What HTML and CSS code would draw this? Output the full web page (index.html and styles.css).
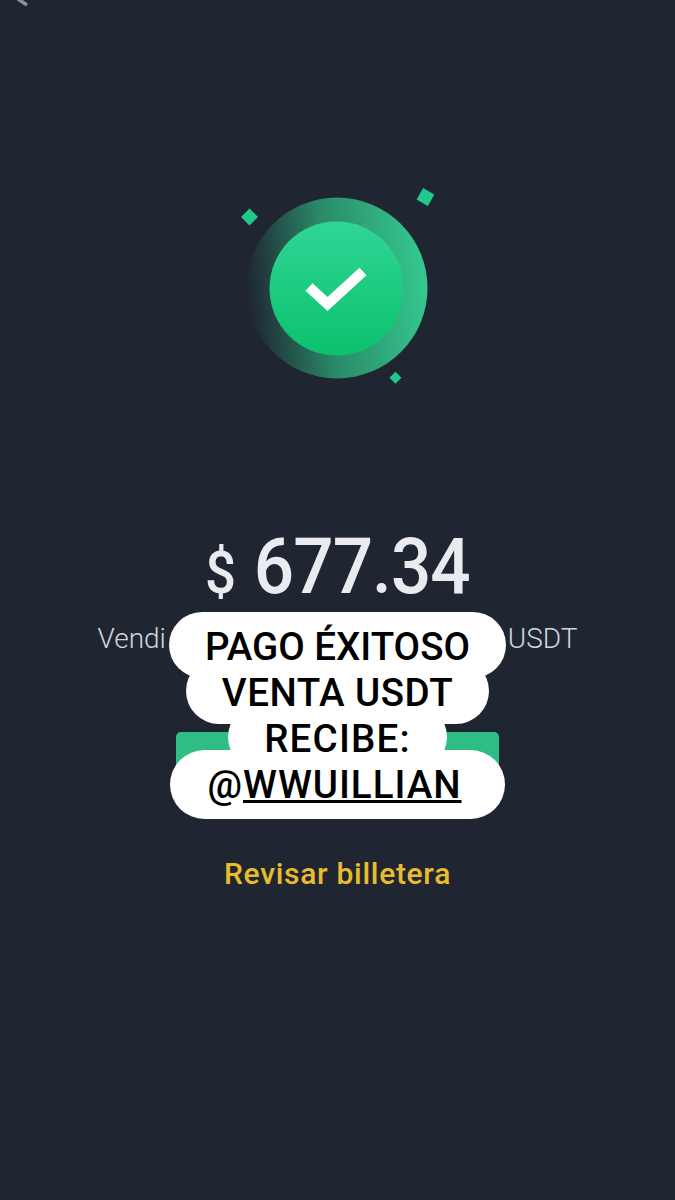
FILE: index.html
```html
<!DOCTYPE html>
<html lang="es">
<head>
    <meta charset="UTF-8">
    <meta name="viewport" content="width=device-width, initial-scale=1.0">
    <title>Pago exitoso</title>
    <link rel="stylesheet" href="styles.css">
</head>
<body>
    <div class="screen">
        <div class="top-bar">
            <svg class="back-icon" width="14" height="8" viewBox="0 0 14 8">
                <path d="M18 -1 L27 5" transform="translate(-16 0)" fill="none" stroke="#8b909a" stroke-width="3.5"/>
            </svg>
        </div>

        <svg class="success-icon" width="200" height="200" viewBox="237 187 200 200">
            <defs>
                <linearGradient id="ringFill" x1="0" y1="0.55" x2="1" y2="0.45">
                    <stop offset="0.03" stop-color="#2a8a68" stop-opacity="0.04"/>
                    <stop offset="0.45" stop-color="#2a8a68"/>
                    <stop offset="1" stop-color="#35c98f"/>
                </linearGradient>
                <linearGradient id="discFill" x1="0" y1="0" x2="0" y2="1">
                    <stop offset="0" stop-color="#30d596"/>
                    <stop offset="1" stop-color="#0bc16c"/>
                </linearGradient>
            </defs>
            <circle cx="336" cy="288" r="90.5" fill="url(#ringFill)"/>
            <circle cx="335.5" cy="288.5" r="67" fill="url(#discFill)"/>
            <path d="M308 287 L326.5 304 L362 271.5" fill="none" stroke="#fff" stroke-width="10.5"/>
            <rect x="242.5" y="211" width="12" height="12" fill="#20c98b" transform="rotate(45 248.5 217)"/>
            <rect x="418" y="190.5" width="13" height="13" fill="#20c98b" transform="rotate(30 424.5 197)"/>
            <rect x="390.2" y="373.5" width="8.5" height="8.5" fill="#20c98b" transform="rotate(45 394.5 377.7)"/>
        </svg>

        <div class="amount"><span class="currency">$</span> <span class="value">677.34</span></div>

        <div class="summary">
            <span>Vendi</span>
            <span>USDT</span>
        </div>

        <div class="action-btn"></div>

        <a class="wallet-link" href="#">Revisar billetera</a>

        <div class="caption">
            <span class="pill">PAGO ÉXITOSO</span>
            <span class="pill pill-second">VENTA USDT</span>
            <span class="pill pill-third">RECIBE:</span>
            <span class="pill pill-last">@<u>WWUILLIAN</u></span>
        </div>
    </div>
</body>
</html>
```

FILE: styles.css
```css
/* Page */
body {
    margin: 0;
    background: #1f2632;
    font-family: Roboto, 'Liberation Sans', sans-serif;
}

.screen {
    position: relative;
    display: flex;
    flex-direction: column;
    align-items: center;
    height: 1200px;
    overflow: hidden;
}

/* Top bar, cut off by the edge of the picture */
.top-bar {
    align-self: flex-start;
    height: 187px;
    padding-left: 16px;
}

.back-icon {
    display: block;
}

.success-icon {
    display: block;
}

/* Amount */
.amount {
    margin-top: 135px;
    height: 94px;
    line-height: 90px;
    color: #e9ebef;
    font-size: 78px;
    font-weight: 500;
    white-space: nowrap;
    transform: scaleX(0.91);
}

.currency {
    font-size: 60px;
}

.value {
    letter-spacing: -1px;
}

/* Line under the amount */
.summary {
    display: flex;
    justify-content: space-between;
    width: 480px;
    height: 46px;
    line-height: 46px;
    color: #d3d6dc;
    font-size: 28px;
    font-weight: 300;
}

/* Button */
.action-btn {
    width: 323px;
    height: 60px;
    margin-top: 70px;
    background: #2ebd85;
    border-radius: 5px;
}

.wallet-link {
    margin-top: 64px;
    color: #e9bc2c;
    font-size: 30px;
    font-weight: 500;
    letter-spacing: 0.7px;
    text-decoration: none;
}

/* White caption on top of the screen */
.caption {
    position: absolute;
    top: 612px;
    left: 0;
    right: 0;
    isolation: isolate;
    display: flex;
    flex-direction: column;
    align-items: center;
    color: #000;
    font-size: 38.5px;
    font-weight: 500;
    line-height: 46px;
}

/* The white goes behind all the lines, so a pill never covers the line above it */
.pill {
    position: relative;
    padding: 12px 36px 8px;
    margin-bottom: -20px;
    white-space: nowrap;
}

.pill::before {
    content: "";
    position: absolute;
    inset: 0;
    z-index: -1;
    background: #fff;
    border-radius: 33px;
}

.pill-second {
    letter-spacing: 0.5px;
}

.pill-third {
    letter-spacing: 1.2px;
}

.pill-last {
    padding: 12px 43px 11px 37px;
    letter-spacing: 1px;
}

.pill-last::before {
    border-radius: 35px;
}
```
